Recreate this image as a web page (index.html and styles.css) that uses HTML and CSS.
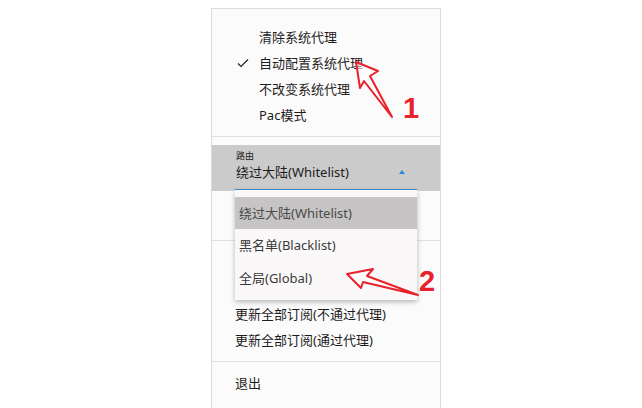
FILE: index.html
```html
<!DOCTYPE html>
<html lang="zh-CN">

<head>
    <meta charset="UTF-8">
    <meta name="viewport" content="width=device-width, initial-scale=1.0">
    <title>托盘菜单</title>
    <link rel="stylesheet" href="styles.css">
</head>

<body>
    <div class="page">
        <div class="menu">
            <div class="sec top">
                <div class="item">清除系统代理</div>
                <div class="item checked">
                    <svg class="check" width="12" height="10" viewBox="0 0 12 10">
                        <polyline points="1,5.5 4,8.5 11,1.5" fill="none" stroke="#222" stroke-width="1.2" />
                    </svg>
                    自动配置系统代理
                </div>
                <div class="item">不改变系统代理</div>
                <div class="item">Pac模式</div>
            </div>
            <div class="line"></div>
            <div class="band">
                <div class="combo">
                    <div class="label">路由</div>
                    <div class="value">
                        <span>绕过大陆(Whitelist)</span>
                        <span class="tri"></span>
                    </div>
                </div>
            </div>
            <div class="sec low">
                <!-- rows under the open list are covered, only the separator shows -->
                <div class="item"></div>
                <div class="line"></div>
                <div class="item"></div>
                <div class="item"></div>
                <div class="item">更新全部订阅(不通过代理)</div>
                <div class="item">更新全部订阅(通过代理)</div>
                <div class="line"></div>
                <div class="item">退出</div>
            </div>
        </div>

        <div class="popup">
            <div class="opt on">绕过大陆(Whitelist)</div>
            <div class="opt">黑名单(Blacklist)</div>
            <div class="opt">全局(Global)</div>
        </div>

        <svg class="marks" width="642" height="408" viewBox="0 0 642 408">
            <polygon points="356,62 378,71 370,76 392,117 364,81 360,88" fill="#fff" fill-opacity="0.6" stroke="#e8212a" stroke-width="2" stroke-linejoin="round" />
            <polygon points="347,274 373,269 367,276 418,295 363,282 361,288" fill="#fff" fill-opacity="0.6" stroke="#e8212a" stroke-width="2" stroke-linejoin="round" />
            <text x="403" y="118" class="num">1</text>
            <text x="419" y="291" class="num">2</text>
        </svg>
    </div>
</body>
</html>
```

FILE: styles.css
```css
* {
    margin: 0px;
    padding: 0px;
    box-sizing: border-box;
}

html,
body {
    width: 100%;
    height: 100%;
    background: #ffffff;
    overflow: hidden;
}

body {
    font-family: "Noto Sans", "Noto Sans CJK SC", sans-serif;
    font-size: 13px;
    color: #1c1c1c;
}

.page {
    position: relative;
    width: 642px;
    height: 408px;
    padding-top: 8px;
}

.menu {
    margin-left: 211px;
    width: 230px;
    height: 420px;
    border: 1px solid #dcdcdc;
    background: #fcfbfb;
}

.menu .sec.top {
    padding-top: 15px;
}

.menu .item {
    height: 26px;
    line-height: 26px;
    white-space: nowrap;
}

.menu .top .item {
    position: relative;
    padding-left: 47px;
}

.menu .top .check {
    position: absolute;
    left: 25px;
    top: 8px;
}

.menu .line {
    height: 1px;
    background: #e2e0e0;
    margin: 8px 0px;
}

.menu .band {
    height: 46px;
    background: #cccbcb;
    padding-left: 23px;
    padding-top: 5px;
}

.menu .combo {
    width: 182px;
    height: 41px;
    border-bottom: 2px solid #3b8ed6;
}

.menu .combo .label {
    font-size: 9px;
    line-height: 12px;
    height: 12px;
    padding-left: 1px;
}

.menu .combo .value {
    display: flex;
    align-items: center;
    justify-content: space-between;
    height: 20px;
    line-height: 20px;
    padding-left: 1px;
    padding-right: 12px;
}

.menu .combo .tri {
    width: 0px;
    height: 0px;
    border-left: 3.5px solid transparent;
    border-right: 3.5px solid transparent;
    border-bottom: 4px solid #2a86d8;
}

.menu .sec.low {
    padding-top: 15px;
    padding-left: 23px;
}

.menu .low .line {
    margin-left: -23px;
}

.popup {
    position: absolute;
    left: 235px;
    top: 190px;
    width: 182px;
    height: 110px;
    padding: 7px 0px;
    background: #fbf8f9;
    box-shadow: 0px 2px 5px rgba(0, 0, 0, 0.28);
}

.popup .opt {
    height: 32px;
    line-height: 32px;
    padding-left: 4px;
    color: #3a3a3a;
    white-space: nowrap;
}

.popup .opt:nth-child(3) {
    height: 33px;
    line-height: 34px;
}

.popup .opt.on {
    background: #c6c4c4;
    color: #4a4a4a;
}

.marks {
    position: absolute;
    left: 0px;
    top: 0px;
    pointer-events: none;
}

.marks .num {
    font-family: "Liberation Sans", Arial, sans-serif;
    font-weight: 700;
    font-size: 29px;
    fill: #e8212a;
}
```
